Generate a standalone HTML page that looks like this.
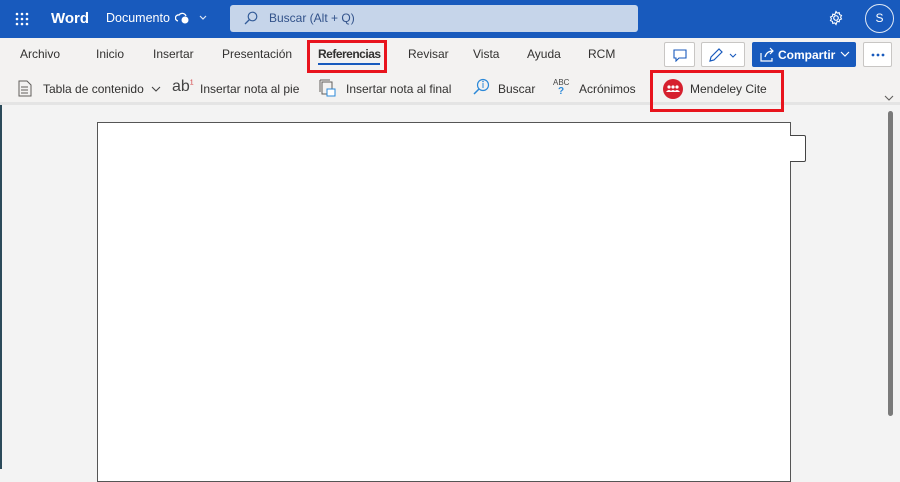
<!DOCTYPE html>
<html><head><meta charset="utf-8"><style>
*{margin:0;padding:0;box-sizing:border-box}
body{width:900px;height:469px;overflow:hidden;position:relative;background:#f3f3f3;font-family:"Liberation Sans",Arial,sans-serif;color:#323130}
.a{position:absolute;white-space:nowrap}
.top{left:0;top:0;width:900px;height:38px;background:#185abd}
.rib{left:0;top:38px;width:900px;height:67px;background:#f3f2f1;border-bottom:3px solid #e4e4e4}
.t{font-size:12px;top:47px}
.b{font-size:12px;top:82px}
.red{border:3px solid #e8141d}
.btn{background:#fff;border:1px solid #c8c6c4;border-radius:2px;height:25px;top:42px}
</style></head><body>
<div class="a top"></div>
<div class="a" style="left:0;top:38px;width:2px;height:431px;background:#2b4a5a"></div>
<svg class="a" style="left:15px;top:12px" width="14" height="14"><g fill="#fff"><circle cx="2" cy="2" r="1.3"/><circle cx="7" cy="2" r="1.3"/><circle cx="12" cy="2" r="1.3"/><circle cx="2" cy="7" r="1.3"/><circle cx="7" cy="7" r="1.3"/><circle cx="12" cy="7" r="1.3"/><circle cx="2" cy="12" r="1.3"/><circle cx="7" cy="12" r="1.3"/><circle cx="12" cy="12" r="1.3"/></g></svg>
<div class="a" style="left:51px;top:10px;color:#fff;font-weight:bold;font-size:15px">Word</div>
<div class="a" style="left:106px;top:11px;color:#fff;font-size:12.5px">Documento</div>
<svg class="a" style="left:175px;top:11px" width="32" height="14"><path d="M3 10a3 3 0 0 1 1-6 4 4 0 0 1 7 1" fill="none" stroke="#fff" stroke-width="1.3"/><circle cx="10" cy="9" r="3.5" fill="#fff"/><path d="M25 5l3 3 3-3" fill="none" stroke="#dce6f5" stroke-width="1.2"/></svg>
<div class="a" style="left:230px;top:5px;width:408px;height:27px;background:#c6d5ea;border-radius:3px"></div>
<svg class="a" style="left:244px;top:11px" width="14" height="14"><circle cx="8.5" cy="5.5" r="4.3" fill="none" stroke="#335c99" stroke-width="1.2"/><path d="M5.5 8.5L1 13" stroke="#335c99" stroke-width="1.3"/></svg>
<div class="a" style="left:269px;top:11px;font-size:12px;color:#32528a">Buscar (Alt + Q)</div>
<svg class="a" style="left:828px;top:10px" width="16" height="16" viewBox="0 0 16 16"><circle cx="8" cy="8" r="2.3" fill="none" stroke="#fff" stroke-width="1.2"/><path d="M8 1.5l1.2 1.6 2-.5.4 2 1.9.8-.9 1.8.9 1.8-1.9.8-.4 2-2-.5L8 14.5l-1.2-1.6-2 .5-.4-2-1.9-.8.9-1.8-.9-1.8 1.9-.8.4-2 2 .5z" fill="none" stroke="#fff" stroke-width="1.1"/></svg>
<div class="a" style="left:865px;top:4px;width:29px;height:29px;border:1px solid #dfe8f5;border-radius:50%;color:#fff;font-size:12px;text-align:center;line-height:27px">S</div>

<div class="a rib"></div>
<div class="a t" style="left:20px">Archivo</div>
<div class="a t" style="left:96px">Inicio</div>
<div class="a t" style="left:153px">Insertar</div>
<div class="a t" style="left:222px">Presentación</div>
<div class="a t" style="left:318px;font-weight:bold;letter-spacing:-0.5px">Referencias</div>
<div class="a" style="left:318px;top:63px;width:62px;height:2px;background:#185abd"></div>
<div class="a red" style="left:307px;top:40px;width:80px;height:33px"></div>
<div class="a t" style="left:408px">Revisar</div>
<div class="a t" style="left:473px">Vista</div>
<div class="a t" style="left:527px">Ayuda</div>
<div class="a t" style="left:588px">RCM</div>
<div class="a btn" style="left:664px;width:31px"><svg style="margin:6px 8px" width="14" height="13"><path d="M1 1h12v8H6l-3 3V9H1z" fill="none" stroke="#185abd" stroke-width="1.1"/></svg></div>
<div class="a btn" style="left:701px;width:44px"><svg style="margin:5px 6px" width="32" height="15"><path d="M2 13l1-4 8-8 3 3-8 8z" fill="none" stroke="#185abd" stroke-width="1.2"/><path d="M22 6l3 3 3-3" fill="none" stroke="#185abd" stroke-width="1.1"/></svg></div>
<div class="a" style="left:752px;top:42px;width:104px;height:25px;background:#185abd;border-radius:2px"></div>
<div class="a" style="left:778px;top:48px;color:#fff;font-weight:bold;font-size:12px">Compartir</div>
<svg class="a" style="left:840px;top:51px" width="10" height="7"><path d="M1 1l4 4 4-4" fill="none" stroke="#fff" stroke-width="1.2"/></svg>
<svg class="a" style="left:759px;top:47px" width="16" height="15"><path d="M2 6v8h11v-3M6 10c1-4 4-6 8-6M11 1l3 3-3 3" fill="none" stroke="#fff" stroke-width="1.2"/></svg>
<div class="a btn" style="left:863px;width:29px"><svg style="margin:10px 7px" width="14" height="4"><g fill="#185abd"><circle cx="2" cy="2" r="1.4"/><circle cx="7" cy="2" r="1.4"/><circle cx="12" cy="2" r="1.4"/></g></svg></div>

<svg class="a" style="left:18px;top:80px" width="14" height="17"><path d="M1 1h8l4 4v11H1z" fill="none" stroke="#605e5c"/><path d="M3 7h7M3 10h7M3 13h7" stroke="#605e5c"/></svg>
<div class="a b" style="left:43px">Tabla de contenido</div>
<svg class="a" style="left:151px;top:86px" width="10" height="7"><path d="M1 1l4 4 4-4" fill="none" stroke="#444" stroke-width="1.1"/></svg>
<div class="a" style="left:172px;top:78px;font-size:16px;color:#444">ab<sup style="color:#d13438;font-size:7px">1</sup></div>
<div class="a b" style="left:200px">Insertar nota al pie</div>
<svg class="a" style="left:319px;top:79px" width="18" height="18"><path d="M1 1h10M1 1v12M3 3h10v12H3z" fill="none" stroke="#605e5c"/><rect x="8" y="10" width="8" height="7" fill="#fff" stroke="#2b88d8"/></svg>
<div class="a b" style="left:346px">Insertar nota al final</div>
<svg class="a" style="left:472px;top:78px" width="18" height="18"><circle cx="11" cy="7" r="5.5" fill="none" stroke="#2b88d8" stroke-width="1.2"/><path d="M11 5v5" stroke="#2b88d8"/><circle cx="11" cy="3.5" r=".8" fill="#2b88d8"/><path d="M7 11l-5 5" stroke="#2b88d8" stroke-width="1.5"/></svg>
<div class="a b" style="left:498px">Buscar</div>
<div class="a" style="left:553px;top:78px;font-size:8px;color:#444">ABC</div>
<div class="a" style="left:558px;top:86px;font-size:10px;color:#2b88d8;font-weight:bold">?</div>
<div class="a b" style="left:579px">Acrónimos</div>
<div class="a red" style="left:650px;top:70px;width:134px;height:42px"></div>
<div class="a" style="left:663px;top:79px;width:20px;height:20px;border-radius:50%;background:#d6202e"></div>
<svg class="a" style="left:665px;top:84px" width="16" height="10"><g fill="#fff"><circle cx="4" cy="3" r="1.6"/><circle cx="8" cy="3" r="1.6"/><circle cx="12" cy="3" r="1.6"/><path d="M1 8q3-4 6 0M5 8q3-4 6 0M9 8q3-4 6 0"/></g></svg>
<div class="a b" style="left:690px">Mendeley Cite</div>
<svg class="a" style="left:884px;top:95px" width="10" height="7"><path d="M1 1l4 4 4-4" fill="none" stroke="#605e5c" stroke-width="1.1"/></svg>

<div class="a" style="left:97px;top:122px;width:694px;height:360px;background:#fff;border:1px solid #555"></div>
<div class="a" style="left:790px;top:135px;width:16px;height:27px;background:#fff;border:1px solid #444;border-left:none;border-radius:0 2px 2px 0"></div>
<div class="a" style="left:888px;top:111px;width:5px;height:305px;background:#7a7a7a;border-radius:3px"></div>
</body></html>
